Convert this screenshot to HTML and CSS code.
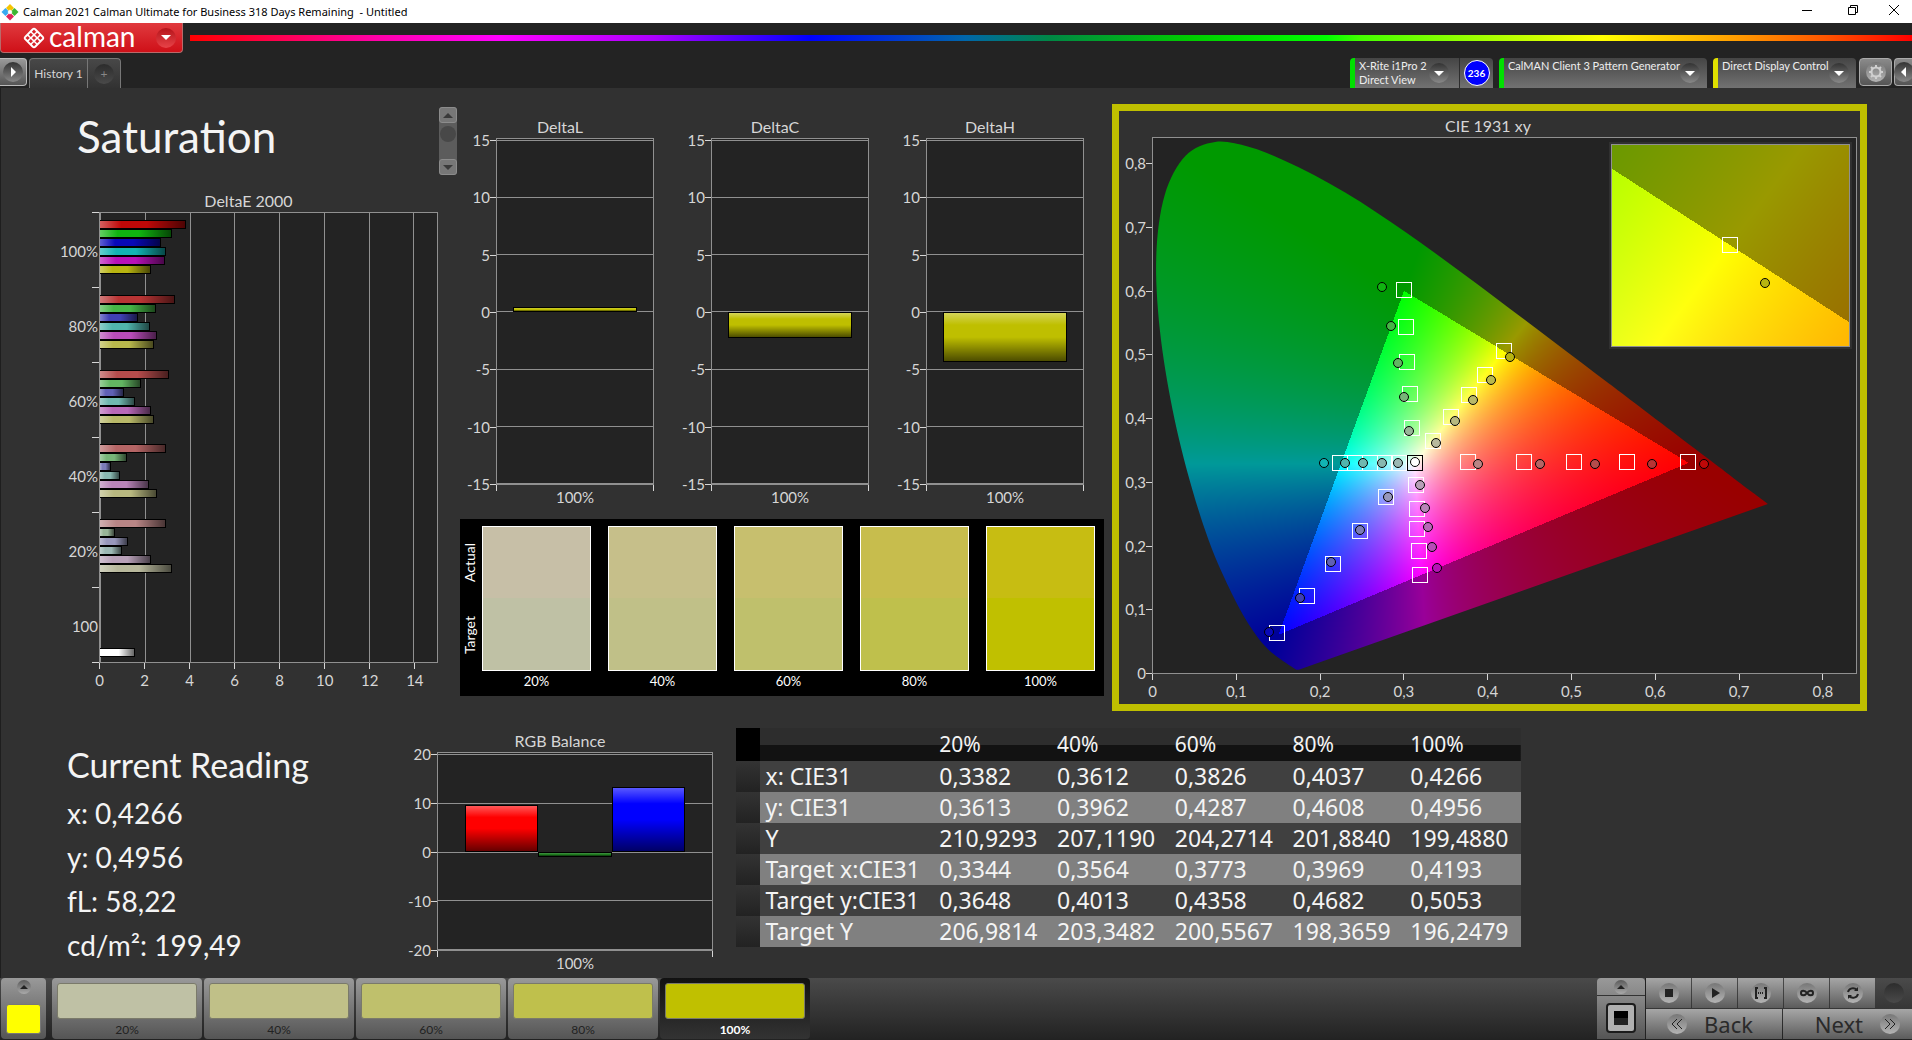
FILE: index.html
```html
<!DOCTYPE html>
<html lang="en">
<head>
    <meta charset="UTF-8">
    <meta name="viewport" content="width=device-width, initial-scale=1.0">
    <title>Calman 2021 Calman Ultimate for Business</title>
    <link rel="stylesheet" href="styles.css">
</head>
<body>
    <header class="titlebar">
        <svg class="app-icon" width="18" height="18" viewBox="0 0 18 18">
            <path d="M9 1l4 4-4 4-4-4z" fill="#f5c400"/>
            <path d="M4.500 5l4 4-4 4-4-4z" fill="#39a9f0"/>
            <path d="M13.500 5l4 4-4 4-4-4z" fill="#3cb532"/>
            <path d="M9 9.500l4 4-4 4-4-4z" fill="#e0245a"/>
            <path d="M9 6.500l2.500 2.500L9 11.500 6.500 9z" fill="#fff"/>
        </svg>
        <span class="window-title">Calman 2021 Calman Ultimate for Business 318 Days Remaining &nbsp;- Untitled</span>
        <div class="window-buttons">
            <button type="button" aria-label="Minimize"><svg width="12" height="12" viewBox="0 0 12 12"><path d="M1 6.500h10"/></svg></button>
            <button type="button" aria-label="Restore"><svg width="12" height="12" viewBox="0 0 12 12"><path d="M1.500 3.500h7v7h-7zM3.500 3.500v-2h7v7h-2"/></svg></button>
            <button type="button" aria-label="Close"><svg width="12" height="12" viewBox="0 0 12 12"><path d="M1 1l10 10M11 1L1 11"/></svg></button>
        </div>
    </header>

    <div class="brandbar">
        <button type="button" class="brand">
            <svg width="24" height="24" viewBox="0 0 24 24">
                <rect x="4" y="4" width="16" height="16" rx="3" transform="rotate(45 12 12)" fill="#fff"/>
                <g transform="rotate(45 12 12)" fill="#d8232a">
                    <rect x="6" y="6" width="3" height="3"/>
                    <rect x="10.500" y="6" width="3" height="3"/>
                    <rect x="15" y="6" width="3" height="3"/>
                    <rect x="6" y="10.500" width="3" height="3"/>
                    <rect x="10.500" y="10.500" width="3" height="3"/>
                    <rect x="15" y="10.500" width="3" height="3"/>
                    <rect x="6" y="15" width="3" height="3"/>
                    <rect x="10.500" y="15" width="3" height="3"/>
                    <rect x="15" y="15" width="3" height="3"/>
                </g>
            </svg>
            <span class="brand-name">calman</span>
            <span class="knob red"><i class="arrow-down"></i></span>
        </button>
        <div class="rainbow"></div>
    </div>

    <nav class="tabs">
        <button type="button" class="side-button" aria-label="Expand left"><span class="knob"><i class="arrow-right"></i></span></button>
        <div class="history">
            <button type="button" class="history-tab">History 1</button>
            <button type="button" class="history-add" aria-label="Add history"><span class="knob dark">+</span></button>
        </div>
        <div class="devices">
            <div class="device meter">
                <span class="device-name">X-Rite i1Pro 2<br>Direct View</span>
                <button type="button" class="knob" aria-label="Meter menu"><i class="arrow-down"></i></button>
                <span class="badge-cell"><span class="badge">236</span></span>
            </div>
            <div class="device source">
                <span class="device-name">CalMAN Client 3 Pattern Generator</span>
                <button type="button" class="knob" aria-label="Source menu"><i class="arrow-down"></i></button>
            </div>
            <div class="device display">
                <span class="device-name">Direct Display Control</span>
                <button type="button" class="knob" aria-label="Display menu"><i class="arrow-down"></i></button>
            </div>
            <button type="button" class="tool-button" aria-label="Settings">
                <span class="knob light"><svg width="16" height="16" viewBox="0 0 16 16"><circle cx="8" cy="8" r="4.500" fill="none" stroke="#d0d0d0" stroke-width="2"/><path d="M8 1v2M8 13v2M1 8h2M13 8h2M3 3l1.500 1.500M11.500 11.500L13 13M3 13l1.500-1.500M11.500 4.500L13 3" stroke="#d0d0d0" stroke-width="2"/></svg></span>
            </button>
            <button type="button" class="tool-button last" aria-label="Expand right"><span class="knob"><i class="arrow-left"></i></span></button>
        </div>
    </nav>

    <main>
        <section class="top">
            <div class="col-left">
                <div class="heading">
                    <h1>Saturation</h1>
                    <div class="scroller">
                        <button type="button" aria-label="Up"><i></i></button>
                        <span class="thumb"></span>
                        <button type="button" class="down" aria-label="Down"><i></i></button>
                    </div>
                </div>
                <figure class="chart delta-e">
                    <figcaption>DeltaE 2000</figcaption>
                    <div class="frame">
                        <div class="group-axis">
                            <span>100%</span><span>80%</span><span>60%</span><span>40%</span><span>20%</span><span>100</span>
                        </div>
                        <div class="plot">
                            <div class="grid vertical"><i></i><i></i><i></i><i></i><i></i><i></i><i></i><i></i></div>
                            <div class="groups" id="delta-e-bars"></div>
                        </div>
                        <div class="x-axis">
                            <span>0</span><span>2</span><span>4</span><span>6</span><span>8</span><span>10</span><span>12</span><span>14</span>
                        </div>
                    </div>
                </figure>
            </div>

            <div class="col-mid">
                <div class="deltas">
                    <figure class="chart">
                        <figcaption>DeltaL</figcaption>
                        <div class="frame">
                            <div class="y-axis"><span>15</span><span>10</span><span>5</span><span>0</span><span>-5</span><span>-10</span><span>-15</span></div>
                            <div class="plot" data-min="-15" data-max="15.150" data-bars="0.5:#bfbf00"><div class="grid"><i></i><i></i><i></i><i></i><i></i><i></i><i></i></div></div>
                            <div class="x-single">100%</div>
                        </div>
                    </figure>
                    <figure class="chart">
                        <figcaption>DeltaC</figcaption>
                        <div class="frame">
                            <div class="y-axis"><span>15</span><span>10</span><span>5</span><span>0</span><span>-5</span><span>-10</span><span>-15</span></div>
                            <div class="plot" data-min="-15" data-max="15.150" data-bars="-2.2:#bfbf00"><div class="grid"><i></i><i></i><i></i><i></i><i></i><i></i><i></i></div></div>
                            <div class="x-single">100%</div>
                        </div>
                    </figure>
                    <figure class="chart">
                        <figcaption>DeltaH</figcaption>
                        <div class="frame">
                            <div class="y-axis"><span>15</span><span>10</span><span>5</span><span>0</span><span>-5</span><span>-10</span><span>-15</span></div>
                            <div class="plot" data-min="-15" data-max="15.150" data-bars="-4.3:#bfbf00"><div class="grid"><i></i><i></i><i></i><i></i><i></i><i></i><i></i></div></div>
                            <div class="x-single">100%</div>
                        </div>
                    </figure>
                </div>
                <div class="swatches">
                    <div class="swatch-side"><span>Actual</span><span>Target</span></div>
                    <div class="swatch sat-20"><div class="patch"></div>20%</div>
                    <div class="swatch sat-40"><div class="patch"></div>40%</div>
                    <div class="swatch sat-60"><div class="patch"></div>60%</div>
                    <div class="swatch sat-80"><div class="patch"></div>80%</div>
                    <div class="swatch sat-100"><div class="patch"></div>100%</div>
                </div>
            </div>

            <figure class="chart cie">
                <figcaption>CIE 1931 xy</figcaption>
                <div class="frame">
                    <div class="y-axis"><span>0,8</span><span>0,7</span><span>0,6</span><span>0,5</span><span>0,4</span><span>0,3</span><span>0,2</span><span>0,1</span><span>0</span></div>
                    <div class="plot" id="cie-plot">
                        <canvas id="cie-canvas"></canvas>
                        <div class="inset" id="cie-inset"><canvas id="inset-canvas"></canvas></div>
                    </div>
                    <div class="x-axis"><span>0</span><span>0,1</span><span>0,2</span><span>0,3</span><span>0,4</span><span>0,5</span><span>0,6</span><span>0,7</span><span>0,8</span></div>
                </div>
            </figure>
        </section>

        <section class="bottom">
            <div class="reading">
                <h2>Current Reading</h2>
                <p>x: 0,4266</p>
                <p>y: 0,4956</p>
                <p>fL: 58,22</p>
                <p>cd/m²: 199,49</p>
            </div>
            <figure class="chart rgb">
                <figcaption>RGB Balance</figcaption>
                <div class="frame">
                    <div class="y-axis"><span>20</span><span>10</span><span>0</span><span>-10</span><span>-20</span></div>
                    <div class="plot" data-min="-20" data-max="20.300" data-bars="9.7:#ff0000,-0.9:#1e7a1e,13.4:#0000ff"><div class="grid"><i></i><i></i><i></i><i></i><i></i></div></div>
                    <div class="x-single">100%</div>
                </div>
            </figure>
            <table class="readings">
                <thead>
                    <tr><td></td><td></td><th>20%</th><th>40%</th><th>60%</th><th>80%</th><th>100%</th></tr>
                </thead>
                <tbody>
                    <tr><td></td><th>x: CIE31</th><td>0,3382</td><td>0,3612</td><td>0,3826</td><td>0,4037</td><td>0,4266</td></tr>
                    <tr><td></td><th>y: CIE31</th><td>0,3613</td><td>0,3962</td><td>0,4287</td><td>0,4608</td><td>0,4956</td></tr>
                    <tr><td></td><th>Y</th><td>210,9293</td><td>207,1190</td><td>204,2714</td><td>201,8840</td><td>199,4880</td></tr>
                    <tr><td></td><th>Target x:CIE31</th><td>0,3344</td><td>0,3564</td><td>0,3773</td><td>0,3969</td><td>0,4193</td></tr>
                    <tr><td></td><th>Target y:CIE31</th><td>0,3648</td><td>0,4013</td><td>0,4358</td><td>0,4682</td><td>0,5053</td></tr>
                    <tr><td></td><th>Target Y</th><td>206,9814</td><td>203,3482</td><td>200,5567</td><td>198,3659</td><td>196,2479</td></tr>
                </tbody>
            </table>
        </section>
    </main>

    <footer class="toolbar">
        <button type="button" class="pattern-button" aria-label="Pattern">
            <span class="knob small"><i class="arrow-up"></i></span>
            <span class="pattern-color"></span>
        </button>
        <div class="levels">
            <button type="button" class="level sat-20"><span></span>20%</button>
            <button type="button" class="level sat-40"><span></span>40%</button>
            <button type="button" class="level sat-60"><span></span>60%</button>
            <button type="button" class="level sat-80"><span></span>80%</button>
            <button type="button" class="level sat-100 active"><span></span>100%</button>
        </div>
        <div class="window-size">
            <button type="button" aria-label="More"><span class="knob small"><i class="arrow-up"></i></span></button>
            <button type="button" aria-label="Window pattern"><svg width="32" height="32" viewBox="0 0 32 32"><rect x="2" y="2" width="28" height="28" rx="3" fill="#b0b0b0" stroke="#1c1c1c" stroke-width="2"/><rect x="9" y="9" width="14" height="14" fill="#000"/><rect x="9" y="16" width="14" height="7" fill="#222"/></svg></button>
        </div>
        <div class="controls">
            <div class="control-row">
                <button type="button" aria-label="Stop"><span class="knob light"><svg width="20" height="20" viewBox="0 0 20 20"><path d="M6 6h8v8H6z" fill="#222"/></svg></span></button>
                <button type="button" aria-label="Play"><span class="knob light"><svg width="20" height="20" viewBox="0 0 20 20"><path d="M7 5l8 5-8 5z" fill="#222"/></svg></span></button>
                <button type="button" aria-label="Read series"><span class="knob light"><svg width="20" height="20" viewBox="0 0 20 20" fill="none" stroke="#222" stroke-width="2"><path d="M7 5H5v10h2M13 5h2v10h-2"/><path d="M7 10h6" stroke-dasharray="1 1"/></svg></span></button>
                <button type="button" aria-label="Continuous"><span class="knob light"><svg width="20" height="20" viewBox="0 0 20 20" fill="none" stroke="#222" stroke-width="2"><path d="M10 10c-2-3-6-3-6 0s4 3 6 0 6-3 6 0-4 3-6 0z"/></svg></span></button>
                <button type="button" aria-label="Refresh"><span class="knob light"><svg width="20" height="20" viewBox="0 0 20 20" fill="none" stroke="#222" stroke-width="2"><path d="M5 9c1-4 6-5 9-2M15 11c-1 4-6 5-9 2"/><path d="M15 4v4h-4zM5 16v-4h4z" fill="#222" stroke="none"/></svg></span></button>
                <span class="blank"><span class="knob dark"></span></span>
            </div>
            <div class="nav-row">
                <button type="button" class="back"><span class="knob light"><svg width="20" height="20" viewBox="0 0 20 20" fill="none" stroke="#222" stroke-width="1"><path d="M10 5l-5 5 5 5M15 5l-5 5 5 5"/></svg></span>Back</button>
                <button type="button" class="next">Next<span class="knob light"><svg width="20" height="20" viewBox="0 0 20 20" fill="none" stroke="#222" stroke-width="1"><path d="M5 5l5 5-5 5M10 5l5 5-5 5"/></svg></span></button>
            </div>
        </div>
    </footer>

    <script src="script.js"></script>
</body>
</html>
```
FILE: styles.css
```css
* {
    box-sizing: border-box;
}

body {
    margin: 0;
    min-height: 100vh;
    display: flex;
    flex-direction: column;
    background-color: #232323;
    color: #d6d6d6;
    font-family: Lato, "Open Sans", sans-serif;
    font-size: 15px;
    overflow-x: hidden;
}

h1, h2, p, figure {
    margin: 0;
    font-weight: normal;
}

button {
    margin: 0;
    padding: 0;
    border: none;
    background: none;
    color: inherit;
    font: inherit;
}

/* window title */
.titlebar {
    display: flex;
    align-items: center;
    height: 23px;
    padding-left: 1px;
    background-color: #fff;
    color: #000;
}

.window-title {
    flex: 1;
    padding-left: 4px;
    font-family: "Noto Sans", "Open Sans", sans-serif;
    font-size: 11px;
}

.window-buttons {
    display: flex;
    margin-bottom: 3px;
}

.window-buttons button {
    width: 46px;
    height: 20px;
    display: flex;
    align-items: center;
    justify-content: center;
}

.window-buttons button:last-child {
    width: 36px;
}

.window-buttons path {
    fill: none;
    stroke: #000;
}

/* brand */
.brandbar {
    display: flex;
    height: 35px;
}

.brand {
    display: flex;
    align-items: center;
    width: 183px;
    height: 30px;
    padding-left: 21px;
    border: 1px solid #b96a6a;
    border-top: none;
    border-radius: 0 0 4px 4px;
    background: linear-gradient(#e03a3e, #cf1018);
    color: #fff;
}

.brand-name {
    flex: 1;
    margin-left: 3px;
    padding-bottom: 4px;
    text-align: left;
    font-size: 28px;
    line-height: 26px;
}

.rainbow {
    flex: 1;
    height: 6px;
    margin: 12px 0 0 7px;
    background: linear-gradient(90deg, #f00, #f0a 11%, #f0f 18%, #a0f 27%, #00f 36%, #06a 45%, #084 50%, #0c0 58%, #0f0 66%, #4f0 68%, #ff0 82%, #f90 90%, #f50 95%, #f00);
}

/* round inset button with an arrow */
.knob {
    display: flex;
    align-items: center;
    justify-content: center;
    flex: none;
    width: 20px;
    height: 20px;
    border-radius: 50%;
    background: linear-gradient(#333, #888);
}

.knob.red {
    margin-right: 6px;
    background: linear-gradient(#b5141a, #e84348);
}

.knob.dark {
    background: linear-gradient(#2c2c2c, #4a4a4a);
}

.knob.light {
    background: linear-gradient(#777, #b4b4b4);
}

.knob.small {
    width: 14px;
    height: 14px;
    background: linear-gradient(#5a5a5a, #aaa);
}

.arrow-down, .arrow-up, .arrow-left, .arrow-right {
    border: 5px solid transparent;
}

.arrow-down {
    border-top-color: #fff;
    border-bottom: none;
}

.arrow-up {
    border-width: 4px;
    border-bottom-color: #222;
    border-top: none;
}

.arrow-left {
    border-right-color: #fff;
    border-left: none;
}

.arrow-right {
    border-left-color: #fff;
    border-right: none;
}

/* tab row */
.tabs {
    display: flex;
    height: 30px;
}

.side-button {
    display: flex;
    align-items: center;
    justify-content: center;
    width: 27px;
    height: 28px;
    border: 1px solid #bbb;
    border-left: none;
    border-radius: 0 4px 4px 0;
    background: linear-gradient(#999, #555);
}

.history {
    display: flex;
    margin-left: 2px;
    border: 1px solid #777;
    border-bottom: none;
    border-radius: 4px 4px 0 0;
    background: linear-gradient(#484848, #323232);
    font-size: 12px;
}

.history-tab {
    width: 58px;
    border-right: 1px solid #777;
}

.history-add {
    display: flex;
    align-items: center;
    justify-content: center;
    width: 32px;
    color: #888;
}

.devices {
    display: flex;
    margin-left: auto;
}

.device {
    display: flex;
    align-items: center;
    margin-right: 6px;
    padding: 0 7px 0 4px;
    border-left: 5px solid #00e000;
    border-radius: 4px 4px 0 0;
    background: linear-gradient(#454545, #727272);
    color: #eee;
    font-size: 11px;
    line-height: 14px;
}

.device.meter {
    width: 143px;
    padding-right: 0;
}

.device.source {
    width: 208px;
}

.device.display {
    width: 143px;
    margin-right: 3px;
    border-left-color: #e0e000;
}

.device-name {
    flex: 1;
    align-self: flex-start;
    padding-top: 1px;
    white-space: nowrap;
}

.badge-cell {
    display: flex;
    align-items: center;
    justify-content: center;
    width: 34px;
    height: 30px;
    margin-left: 10px;
    border-left: 1px solid #2c2c2c;
}

.badge {
    width: 26px;
    height: 26px;
    border: 1px solid #fff;
    border-radius: 50%;
    background-color: #00f;
    color: #fff;
    font-size: 10px;
    font-weight: bold;
    line-height: 24px;
    text-align: center;
}

.tool-button {
    display: flex;
    align-items: center;
    justify-content: center;
    width: 33px;
    height: 28px;
    margin-right: 2px;
    border: 1px solid #aaa;
    border-radius: 4px;
    background: linear-gradient(#8a8a8a, #555);
}

.tool-button.last {
    width: 18px;
    margin-right: 0;
    border-right: none;
    border-radius: 4px 0 0 4px;
}

/* workspace */
main {
    flex: 1;
    background-color: #313131;
    box-shadow: inset 1px 0 #1e1e1e;
}

.top {
    display: grid;
    grid-template-columns: 460fr 652fr 755fr;
    padding-right: 45px;
}

.heading {
    display: flex;
    justify-content: space-between;
    padding: 19px 3px 0 77px;
}

h1 {
    padding-top: 5px;
    color: #f4f4f4;
    font-size: 44px;
    line-height: 48px;
}

.scroller {
    display: flex;
    flex-direction: column;
    width: 18px;
    height: 68px;
    border-radius: 3px;
    background-color: #5c5c5c;
}

.scroller button {
    display: flex;
    align-items: center;
    justify-content: center;
    height: 16px;
    border: 1px solid #8c8c8c;
    border-radius: 3px;
    background-color: #777;
}

.scroller i {
    border: 5px solid transparent;
    border-top: none;
    border-bottom-color: #3a3a3a;
}

.scroller .down {
    margin-top: auto;
}

.scroller .down i {
    border-top: 5px solid #3a3a3a;
    border-bottom: none;
}

.thumb {
    width: 16px;
    height: 16px;
    margin: 3px auto 0;
    border-radius: 50%;
    background-color: #484848;
}

/* charts */
.chart figcaption {
    padding-bottom: 2px;
    font-size: 16px;
    line-height: 18px;
    text-align: center;
}

.frame {
    display: grid;
    grid-template-columns: 30px 1fr;
    grid-template-rows: 347px auto;
}

.plot {
    position: relative;
    border: 1px solid #909090;
    background-color: #232323;
}

.y-axis {
    display: flex;
    flex-direction: column;
    justify-content: space-between;
    padding-top: 2px;
}

.y-axis span {
    display: flex;
    align-items: center;
    justify-content: flex-end;
    height: 1px;
    line-height: 1px;
}

.y-axis span::after {
    content: "";
    width: 6px;
    height: 1px;
    background-color: #d6d6d6;
}

.grid {
    position: absolute;
    inset: 1px 0 0 0;
    display: flex;
    flex-direction: column;
    justify-content: space-between;
}

.grid i {
    height: 1px;
    background-color: #909090;
}

.x-axis {
    grid-column: 2;
    display: flex;
    justify-content: space-between;
}

.x-axis span {
    display: flex;
    flex-direction: column;
    align-items: center;
    width: 1px;
    line-height: 22px;
    white-space: nowrap;
}

.x-axis span::before {
    content: "";
    width: 1px;
    height: 6px;
    background-color: #d6d6d6;
}

.x-single {
    grid-column: 2;
    position: relative;
    padding-top: 2px;
    line-height: 20px;
    text-align: center;
}

.x-single::before {
    content: "";
    position: absolute;
    inset: 0 0 auto 0;
    height: 6px;
    border: 1px solid #d6d6d6;
    border-width: 0 1px;
}

.bar {
    position: absolute;
    border: 1px solid #000;
    background-image: linear-gradient(rgba(255, 255, 255, .35), transparent 25%, transparent 50%, rgba(0, 0, 0, .6));
}

/* DeltaE 2000 */
.delta-e {
    margin: 17px 22px 0 59px;
}

.delta-e .frame {
    grid-template-columns: 40px 1fr;
    grid-template-rows: 451px auto;
}

.group-axis {
    display: flex;
    flex-direction: column;
}

.group-axis span {
    flex: 1;
    display: flex;
    align-items: center;
    justify-content: flex-end;
    padding: 2px 1px 0 0;
    background: linear-gradient(#d6d6d6, #d6d6d6) right top / 7px 1px no-repeat;
}

.group-axis span:last-child {
    border-bottom: 1px solid #d6d6d6;
    border-image: linear-gradient(90deg, transparent 82%, #d6d6d6 82%) 1;
}

.grid.vertical {
    inset: 0 auto 0 0;
    flex-direction: row;
    width: calc(100% * 14 / 15);
}

.grid.vertical i {
    width: 1px;
    height: auto;
}

.delta-e .x-axis {
    width: calc(100% * 14 / 15);
}

.groups {
    position: relative;
    display: flex;
    flex-direction: column;
    height: 100%;
}

.group {
    flex: 1;
    padding-top: 7px;
}

.group div {
    height: 9px;
    border: 1px solid #000;
    border-left: none;
    background-image: linear-gradient(90deg, rgba(255, 255, 255, .35), transparent 25%, transparent 55%, rgba(0, 0, 0, .6));
}

.group .white-bar {
    margin-top: 54px;
}

/* DeltaL, DeltaC, DeltaH */
.deltas {
    display: grid;
    grid-template-columns: 1fr 1fr 1fr;
    gap: 27px;
    margin: 30px 28px 12px 6px;
}

/* measured colour above, wanted colour below */
.swatches {
    display: flex;
    gap: 17px;
    margin-right: 8px;
    padding: 7px 9px 4px 0;
    background-color: #000;
    color: #fff;
    font-size: 13px;
}

.swatch-side {
    display: flex;
    flex-direction: column;
    justify-content: space-around;
    width: 22px;
    height: 145px;
    margin-right: -17px;
    font-size: 14px;
}

.swatch-side span {
    writing-mode: vertical-rl;
    transform: rotate(180deg);
    width: 20px;
    line-height: 20px;
    text-align: center;
}

.swatch {
    flex: 1;
    line-height: 21px;
    text-align: center;
}

.patch {
    height: 145px;
    border: 1px solid #fff;
    background: linear-gradient(var(--actual) 50%, var(--target) 50%);
}

.sat-20 { --actual: #c7bfa7; --target: #bfc1a5; }
.sat-40 { --actual: #c6bf8a; --target: #c0c088; }
.sat-60 { --actual: #c7bf6e; --target: #bfc06c; }
.sat-80 { --actual: #c7bd4d; --target: #bfc04c; }
.sat-100 { --actual: #c7bd12; --target: #c0c000; }

/* CIE diagram */
.cie {
    margin-top: 16px;
    padding: 6px 3px 2px 0;
    border: 7px solid #bfbf00;
}

.cie .frame {
    grid-template-columns: 33px 1fr;
    grid-template-rows: 537px auto;
}

.cie .y-axis {
    padding-top: 26px;
}

.cie .x-axis {
    width: calc(100% * 80 / 84);
}

.cie canvas {
    display: block;
    width: 100%;
    height: 100%;
}

.inset {
    position: absolute;
    top: 6px;
    right: 6px;
    width: 34%;
    height: 38%;
    border: 1px solid #909090;
    outline: 2px solid #303030;
    overflow: hidden;
}

.target, .actual {
    position: absolute;
    transform: translate(-50%, 50%);
}

.target {
    width: 16px;
    height: 16px;
    border: 1px solid #fff;
}

.target.white-point {
    border-color: #000;
}

.actual {
    width: 10px;
    height: 10px;
    border: 1px solid #000;
    border-radius: 50%;
}

/* lower half */
.bottom {
    display: grid;
    grid-template-columns: 407fr 329fr 785fr 391fr;
    align-items: start;
}

.reading {
    padding: 32px 0 0 67px;
    color: #f4f4f4;
    font-size: 28px;
    line-height: 44px;
}

h2 {
    margin-bottom: 4px;
    font-size: 34px;
}

.rgb {
    margin: 21px 23px 0 0;
}

.rgb .frame {
    grid-template-rows: 199px auto;
}

.readings {
    width: 100%;
    margin-top: 17px;
    border-collapse: collapse;
    table-layout: fixed;
    color: #f4f4f4;
    font-family: "Noto Sans", "Open Sans", sans-serif;
    font-size: 23px;
    line-height: 31px;
}

.readings th, .readings td {
    width: 15%;
    padding: 0 0 0 7px;
    font-weight: normal;
    text-align: left;
    white-space: nowrap;
}

.readings tr > :first-child {
    width: 22px;
    background: linear-gradient(#333, #222);
}

.readings tr > :nth-child(2) {
    width: 22%;
    padding-left: 6px;
}

.readings thead tr {
    height: 33px;
    background: linear-gradient(#2d2d2d 50%, #121212 50%);
    font-size: 21px;
}

.readings thead td:first-child {
    background: #000;
}

.readings tbody tr:nth-child(odd) {
    background-color: #404040;
}

.readings tbody tr:nth-child(even) {
    background-color: #808080;
}

/* bottom toolbar */
.toolbar {
    display: flex;
    height: 62px;
    padding-left: 1px;
    background: linear-gradient(#4a4a4a, #222);
}

.pattern-button {
    display: flex;
    flex-direction: column;
    align-items: center;
    justify-content: space-between;
    width: 45px;
    height: 61px;
    padding: 2px 0 5px;
    border-radius: 4px;
    background: linear-gradient(#999, #555);
}

.pattern-color {
    width: 35px;
    height: 30px;
    border: 1px solid #777;
    border-radius: 3px;
    background-color: #ff0;
}

.levels {
    display: flex;
    gap: 2px;
    margin-left: 6px;
}

.level {
    width: 150px;
    height: 61px;
    padding: 5px 5px 0;
    border-radius: 4px;
    background: linear-gradient(#999, #555);
    color: #222;
    font-size: 12px;
    line-height: 22px;
}

.level span {
    display: block;
    height: 36px;
    border: 1px solid #7a7a6a;
    border-radius: 3px;
    background-color: var(--target);
}

.level.active {
    background: linear-gradient(#111, #333);
    color: #fff;
    font-weight: bold;
}

.window-size {
    display: flex;
    flex-direction: column;
    width: 49px;
    margin-left: auto;
    padding-bottom: 1px;
    border-right: 1px solid #222;
}

.window-size button {
    display: flex;
    align-items: center;
    justify-content: center;
    flex: 1;
    background: linear-gradient(#888, #555);
}

.window-size button:first-child {
    flex: none;
    height: 18px;
    border-bottom: 1px solid #333;
    border-radius: 4px 4px 0 0;
    background: linear-gradient(#999, #888);
}

.controls {
    width: 266px;
}

.control-row, .nav-row {
    display: flex;
    gap: 1px;
    height: 30px;
}

.nav-row {
    margin-top: 1px;
}

.control-row button, .nav-row button {
    display: flex;
    align-items: center;
    justify-content: center;
    width: 45px;
    background: linear-gradient(#a6a6a6, #5c5c5c);
}

.control-row .blank {
    display: flex;
    flex: 1;
    align-items: center;
    justify-content: center;
}

.nav-row button {
    gap: 17px;
    color: #2a2a2a;
    font-family: "Noto Sans", "Open Sans", sans-serif;
    font-size: 22px;
    line-height: 30px;
}

.nav-row .back {
    width: 136px;
    padding-right: 8px;
}

.nav-row .next {
    flex: 1;
    justify-content: flex-end;
    padding-right: 12px;
}
```
FILE: script.js
```js
// DeltaE 2000 results: red, green, blue, cyan, magenta, yellow
const deltaE = [
    [3.84, 3.22, 2.70, 2.95, 2.91, 2.29],
    [3.35, 2.49, 1.71, 2.24, 2.55, 2.42],
    [3.08, 1.84, 1.05, 1.58, 2.29, 2.42],
    [2.95, 1.18, 0.50, 0.91, 2.20, 2.55],
    [2.95, 0.65, 1.25, 0.99, 2.29, 3.22]
];

const colors = [
    ['#bf0808', '#10b410', '#0808b8', '#12b4b4', '#b810b8', '#b8b410'],
    ['#b83434', '#46b546', '#4040b4', '#50b5ad', '#b84cb8', '#b8b84c'],
    ['#b54c4c', '#62b562', '#6060b5', '#70b8b0', '#b868b8', '#b8b868'],
    ['#b56565', '#78b578', '#7c7cb8', '#88b8b0', '#b884b8', '#b8b880'],
    ['#b88585', '#98b598', '#9898bc', '#9cb8b4', '#b8a0b8', '#b8b89c']
];

const groups = document.getElementById('delta-e-bars');

function addBar(group, value, color, className) {
    const bar = document.createElement('div');
    bar.style.width = (value / 15 * 100) + '%';
    bar.style.backgroundColor = color;
    if (className) bar.className = className;
    group.appendChild(bar);
}

deltaE.forEach((values, level) => {
    const group = document.createElement('div');
    group.className = 'group';
    values.forEach((value, i) => addBar(group, value, colors[level][i]));
    groups.appendChild(group);
});

const whiteGroup = document.createElement('div');
whiteGroup.className = 'group';
addBar(whiteGroup, 1.58, '#ffffff', 'white-bar');
groups.appendChild(whiteGroup);

// vertical bar charts
document.querySelectorAll('.plot[data-bars]').forEach(plot => {
    const min = Number(plot.dataset.min);
    const max = Number(plot.dataset.max);
    const bars = plot.dataset.bars.split(',');
    const width = 80 / bars.length;
    bars.forEach((item, i) => {
        const [value, color] = item.split(':');
        const low = Math.min(0, value);
        const bar = document.createElement('div');
        bar.className = 'bar';
        bar.style.left = (10 + i * width) + '%';
        bar.style.width = width + '%';
        bar.style.bottom = ((low - min) / (max - min) * 100) + '%';
        bar.style.height = (Math.abs(value) / (max - min) * 100) + '%';
        bar.style.backgroundColor = color;
        plot.appendChild(bar);
    });
});

// spectral locus
const locus = [
    [.1741, .0050], [.1714, .0051], [.1689, .0069], [.1644, .0109], [.1566, .0177], [.1440, .0297],
    [.1355, .0399], [.1241, .0578], [.1096, .0868], [.0913, .1327], [.0687, .2007], [.0454, .2950],
    [.0235, .4127], [.0082, .5384], [.0039, .6548], [.0139, .7502], [.0389, .8120], [.0743, .8338],
    [.1142, .8262], [.1547, .8059], [.1929, .7816], [.2296, .7543], [.2658, .7243], [.3016, .6923],
    [.3373, .6589], [.3731, .6245], [.4087, .5896], [.4441, .5547], [.4788, .5202], [.5125, .4866],
    [.5448, .4544], [.5752, .4242], [.6270, .3725], [.6658, .3340], [.6915, .3083], [.7190, .2809],
    [.7347, .2653]
];

// each series runs from 100% down to 20%, same order as the bars
const targets = [
    [[.6396, .332], [.5669, .332], [.5028, .332], [.4430, .332], [.3760, .332]],
    [[.2995, .6015], [.3020, .543], [.3030, .489], [.3070, .438], [.3090, .385]],
    [[.1480, .0626], [.1836, .1203], [.2150, .171], [.2470, .2226], [.2790, .276]],
    [[.2238, .329], [.2417, .329], [.2592, .329], [.2770, .329], [.2945, .329]],
    [[.3190, .1544], [.3176, .192], [.3160, .2263], [.3160, .2573], [.3140, .2945]],
    [[.4193, .5053], [.3969, .4682], [.3773, .4358], [.3564, .4013], [.3344, .3648]]
];

const actuals = [
    [[.6586, .3274], [.5967, .3274], [.5280, .3274], [.4624, .3274], [.3887, .3274]],
    [[.2735, .6064], [.2842, .545], [.2933, .4874], [.2997, .434], [.3064, .3807]],
    [[.1387, .0639], [.1761, .1178], [.2130, .1736], [.2472, .2251], [.2806, .276]],
    [[.2043, .3293], [.2293, .3293], [.2508, .3293], [.2735, .3293], [.2933, .3293]],
    [[.3390, .1643], [.3339, .1972], [.3283, .23], [.3247, .2598], [.3192, .2945]],
    [[.4266, .4956], [.4037, .4608], [.3826, .4287], [.3612, .3962], [.3382, .3613]]
];

const fullView = { x0: 0, x1: .84, y0: 0, y1: .84 };
const insetView = { x0: .3951, x1: .4439, y0: .4797, y1: .5305 };

// smooth curve through every point of the locus
function traceLocus(ctx, p) {
    ctx.beginPath();
    ctx.moveTo(p[0][0], p[0][1]);
    for (let i = 0; i < p.length - 1; i++) {
        const before = p[Math.max(0, i - 1)];
        const from = p[i];
        const to = p[i + 1];
        const after = p[Math.min(p.length - 1, i + 2)];
        ctx.bezierCurveTo(
            from[0] + (to[0] - before[0]) / 6, from[1] + (to[1] - before[1]) / 6,
            to[0] - (after[0] - from[0]) / 6, to[1] - (after[1] - from[1]) / 6,
            to[0], to[1]
        );
    }
    ctx.closePath();
}

// paints the chromaticities of a view; colours outside the gamut are dimmed
function paint(canvas, view, clipToLocus) {
    const w = canvas.width = canvas.clientWidth;
    const h = canvas.height = canvas.clientHeight;
    const layer = document.createElement('canvas');
    layer.width = w;
    layer.height = h;
    const layerCtx = layer.getContext('2d');
    const image = layerCtx.createImageData(w, h);

    for (let py = 0; py < h; py++) {
        for (let px = 0; px < w; px++) {
            const x = view.x0 + (px + .5) / w * (view.x1 - view.x0);
            const y = view.y1 - (py + .5) / h * (view.y1 - view.y0);
            const z = 1 - x - y;
            const rgb = [
                3.2406 * x - 1.5372 * y - .4986 * z,
                -.9689 * x + 1.8758 * y + .0415 * z,
                .0557 * x - .2040 * y + 1.0570 * z
            ];
            const level = (Math.min(...rgb) < 0 ? 153 : 255) / Math.max(...rgb);
            const at = (py * w + px) * 4;
            for (let c = 0; c < 3; c++) {
                image.data[at + c] = Math.max(0, rgb[c]) * level;
            }
            image.data[at + 3] = 255;
        }
    }
    layerCtx.putImageData(image, 0, 0);

    const ctx = canvas.getContext('2d');
    if (clipToLocus) {
        traceLocus(ctx, locus.map(([x, y]) => [x / view.x1 * w, h - y / view.y1 * h]));
        ctx.clip();
    }
    ctx.drawImage(layer, 0, 0);
}

function addPoint(parent, view, point, className, color) {
    const mark = document.createElement('span');
    mark.className = className;
    mark.style.left = ((point[0] - view.x0) / (view.x1 - view.x0) * 100) + '%';
    mark.style.bottom = ((point[1] - view.y0) / (view.y1 - view.y0) * 100) + '%';
    if (color) mark.style.backgroundColor = color;
    parent.appendChild(mark);
}

const ciePlot = document.getElementById('cie-plot');
const cieInset = document.getElementById('cie-inset');

targets.forEach(series => series.forEach(point => addPoint(ciePlot, fullView, point, 'target')));
addPoint(ciePlot, fullView, [.3127, .329], 'target white-point');
actuals.forEach((series, i) => series.forEach((point, level) => {
    addPoint(ciePlot, fullView, point, 'actual', colors[level][i]);
}));
addPoint(ciePlot, fullView, [.3136, .3317], 'actual', '#ffffff');

addPoint(cieInset, insetView, targets[5][0], 'target');
addPoint(cieInset, insetView, actuals[5][0], 'actual', '#b8b410');

function paintAll() {
    paint(document.getElementById('cie-canvas'), fullView, true);
    paint(document.getElementById('inset-canvas'), insetView, false);
}

paintAll();
window.addEventListener('resize', paintAll);
```
